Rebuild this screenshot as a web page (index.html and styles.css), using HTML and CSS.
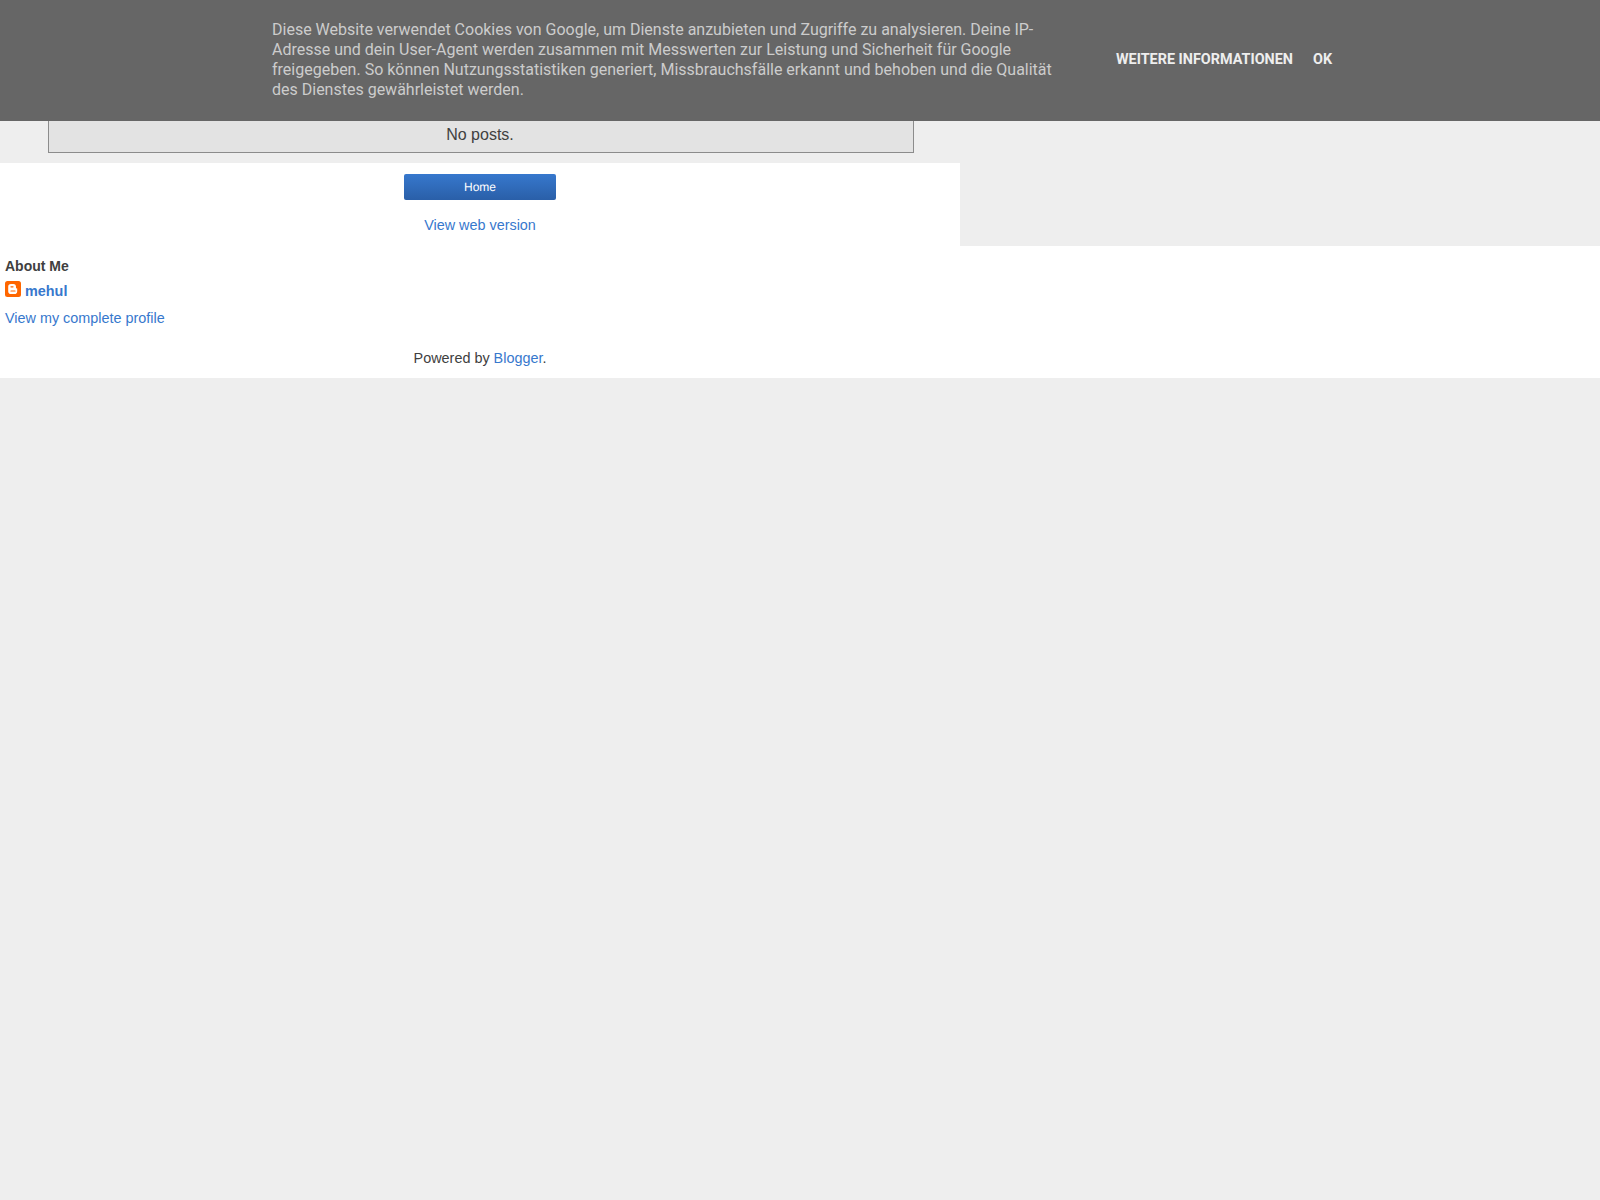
FILE: index.html
```html
<!DOCTYPE html>
<html lang="de">
<head>
<meta charset="utf-8">
<title>Blog</title>
<link rel="stylesheet" href="styles.css">
</head>
<body>
<div class="cookie-bar">
  <div class="cookie-inner">
    <span class="cookie-text">Diese Website verwendet Cookies von Google, um Dienste anzubieten und Zugriffe zu analysieren. Deine IP-Adresse und dein User-Agent werden zusammen mit Messwerten zur Leistung und Sicherheit für Google freigegeben. So können Nutzungsstatistiken generiert, Missbrauchsfälle erkannt und behoben und die Qualität des Dienstes gewährleistet werden.</span>
    <span class="cookie-actions">
      <a class="cookie-link" href="#">Weitere Informationen</a>
      <a class="cookie-link" href="#">OK</a>
    </span>
  </div>
</div>
<main class="main-col">
  <div class="status-box">No posts.</div>
  <div class="mobile-footer">
    <a class="home-btn" href="#">Home</a>
    <a class="web-link" href="#">View web version</a>
  </div>
</main>
<section class="about">
  <h2 class="about-title">About Me</h2>
  <a class="profile-name" href="#">
    <svg class="blogger-icon" viewBox="0 0 16 16" aria-hidden="true">
      <rect width="16" height="16" rx="2.5" fill="#ff6600"/>
      <path d="M6 3h2.4A2.8 2.8 0 0 1 11 5.8v1c0 .5.3.8.8.8h.4V10.2A2.8 2.8 0 0 1 9.4 13H6a2.8 2.8 0 0 1-2.8-2.8V5.8A2.8 2.8 0 0 1 6 3z" fill="#fff"/>
      <rect x="5.4" y="5.3" width="3.2" height="1.1" rx=".55" fill="#ff6600"/>
      <rect x="5.4" y="9.4" width="5.2" height="1.1" rx=".55" fill="#ff6600"/>
    </svg>
    <span>mehul</span>
  </a>
  <a class="profile-link" href="#">View my complete profile</a>
  <p class="attribution">Powered by <a href="#">Blogger</a>.</p>
</section>
</body>
</html>
```
FILE: styles.css
```css
* { box-sizing: border-box; }
html, body { margin: 0; padding: 0; }
body {
  background: #eeeeee;
  color: #404040;
  font-family: "Liberation Sans", Arial, sans-serif;
  font-size: 14.4px;
  min-height: 1200px;
}
a { color: #3778cd; text-decoration: none; }

.cookie-bar {
  position: absolute;
  top: 0;
  left: 0;
  right: 0;
  height: 121px;
  background: #666666;
  font-family: Roboto, sans-serif;
  font-size: 16px;
  line-height: 20px;
}
.cookie-inner {
  display: flex;
  align-items: flex-start;
  width: 1100px;
  margin-left: 272px;
  padding-top: 20px;
}
.cookie-text {
  width: 788px;
  color: #cccccc;
}
.cookie-actions {
  display: flex;
  gap: 20px;
  margin-left: 56px;
  margin-top: 30px;
}
.cookie-link {
  color: #eeeeee;
  font-size: 14.4px;
  font-weight: 700;
  text-transform: uppercase;
}

.main-col { width: 960px; padding-top: 121px; }
.status-box {
  height: 32px;
  margin: 0 46px 10px 48px;
  padding-right: 2px;
  border: 1px solid #8c8c8c;
  border-top: 0;
  background: #e3e3e3;
  font-size: 16px;
  line-height: 28px;
  text-align: center;
}
.mobile-footer {
  height: 83px;
  padding-top: 11px;
  background: #ffffff;
  display: flex;
  flex-direction: column;
  align-items: center;
}
.home-btn {
  display: block;
  width: 152px;
  height: 26px;
  border-radius: 2px;
  background: linear-gradient(#3778cd, #2a5fa8);
  color: #ffffff;
  font-size: 12px;
  line-height: 26px;
  text-align: center;
  text-rendering: geometricPrecision;
}
.web-link {
  margin-top: 17px;
  line-height: 16px;
}

.about {
  height: 132px;
  padding: 12px 5px 0;
  background: #ffffff;
}
.about-title {
  margin: 0;
  font-size: 14px;
  font-weight: 700;
  line-height: 16px;
}
.profile-name {
  display: flex;
  align-items: center;
  gap: 4px;
  margin-top: 9px;
  font-weight: 700;
  line-height: 16px;
}
.blogger-icon { width: 16px; height: 16px; flex: none; margin-top: -5px; }
.profile-link {
  display: block;
  margin-top: 11px;
  line-height: 16px;
}
.attribution {
  width: 950px;
  margin: 24px 0 0;
  line-height: 16px;
  text-align: center;
}
```
